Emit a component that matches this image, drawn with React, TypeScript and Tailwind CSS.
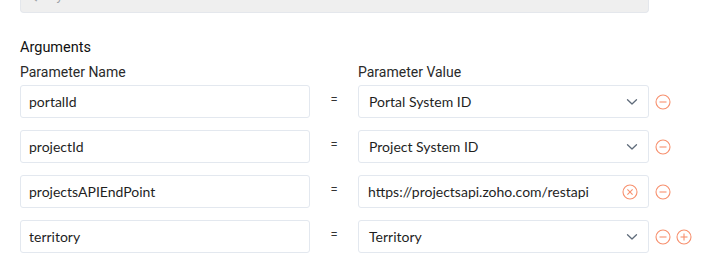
import React from "react";

const MinusIcon = () => (
  <svg width="16" height="16" viewBox="0 0 16 16" fill="none">
    <circle cx="8" cy="8" r="7" stroke="#f7906e" strokeWidth="1.1" />
    <line x1="4.5" y1="8" x2="11.5" y2="8" stroke="#f7906e" strokeWidth="1.1" />
  </svg>
);

const PlusIcon = () => (
  <svg width="16" height="16" viewBox="0 0 16 16" fill="none">
    <circle cx="8" cy="8" r="7" stroke="#f7906e" strokeWidth="1.1" />
    <line x1="4.5" y1="8" x2="11.5" y2="8" stroke="#f7906e" strokeWidth="1.1" />
    <line x1="8" y1="4.5" x2="8" y2="11.5" stroke="#f7906e" strokeWidth="1.1" />
  </svg>
);

const ClearIcon = () => (
  <svg width="16" height="16" viewBox="0 0 16 16" fill="none">
    <circle cx="8" cy="8" r="7" stroke="#f7906e" strokeWidth="1.1" />
    <line x1="5.4" y1="5.4" x2="10.6" y2="10.6" stroke="#f7906e" strokeWidth="1.1" />
    <line x1="10.6" y1="5.4" x2="5.4" y2="10.6" stroke="#f7906e" strokeWidth="1.1" />
  </svg>
);

const Chevron = () => (
  <svg width="12" height="8" viewBox="0 0 12 8" fill="none">
    <path d="M1.5 1.8 L6 6 L10.5 1.8" stroke="#5f6b7a" strokeWidth="1.3" strokeLinecap="round" strokeLinejoin="round" />
  </svg>
);

type Row = { name: string; value: string; kind: "select" | "text"; plus?: boolean };

const rows: Row[] = [
  { name: "portalId", value: "Portal System ID", kind: "select" },
  { name: "projectId", value: "Project System ID", kind: "select" },
  { name: "projectsAPIEndPoint", value: "https://projectsapi.zoho.com/restapi", kind: "text" },
  { name: "territory", value: "Territory", kind: "select", plus: true },
];

export default function App() {
  return (
    <div className="w-[727px] h-[280px] bg-white overflow-hidden" style={{ fontFamily: "Roboto, 'Liberation Sans', sans-serif" }}>
      <div className="pl-[20px]">
        <div className="w-[629px] h-[13px] bg-[#efefef] border-b border-x border-[#e4e7ec] rounded-b-[4px] overflow-hidden relative">
          <span className="absolute left-[8px] top-[-12px] text-[13px] text-[#9aa0a6] leading-[16px]">Query</span>
        </div>
        <div className="mt-[25px] text-[14.5px] leading-[20px] text-[#111]">Arguments</div>
        <div className="mt-[4px] flex text-[14px] leading-[20px] text-[#2a2a2a]">
          <div className="w-[338px]">Parameter Name</div>
          <div>Parameter Value</div>
        </div>
        <div className="mt-[3px] flex flex-col gap-[12px]">
          {rows.map((r) => (
            <div key={r.name} className="flex items-center">
              <div
                className="w-[290px] h-[33px] border border-[#e3e8ef] rounded-[3px] flex items-center pl-[8px] text-[14px] text-[#1f1f1f]"
                style={{ fontFamily: "Lato, 'Liberation Sans', sans-serif" }}
              >
                {r.name}
              </div>
              <div className="w-[48px] text-center text-[13px] text-[#333] pb-[4px]">=</div>
              <div
                className="w-[291px] h-[33px] border border-[#e3e8ef] rounded-[3px] flex items-center justify-between pl-[10px] pr-[10px] text-[14px] text-[#1f1f1f]"
                style={{ fontFamily: "Lato, 'Liberation Sans', sans-serif" }}
              >
                <span className={r.kind === "text" ? "-ml-[1px]" : ""}>{r.value}</span>
                {r.kind === "select" ? <Chevron /> : <ClearIcon />}
              </div>
              <div className="ml-[6px] flex items-center gap-[5px]">
                <MinusIcon />
                {r.plus && <PlusIcon />}
              </div>
            </div>
          ))}
        </div>
      </div>
    </div>
  );
}
